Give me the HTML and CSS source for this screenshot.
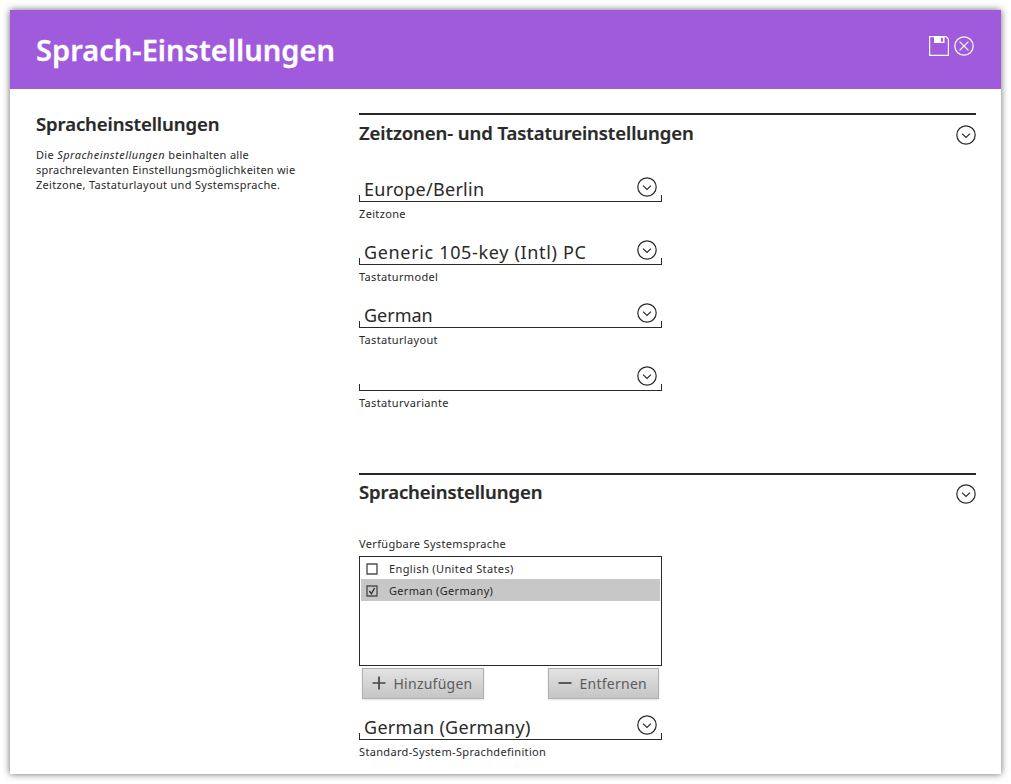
FILE: index.html
```html
<!DOCTYPE html>
<html lang="de">
<head>
<meta charset="utf-8">
<title>Sprach-Einstellungen</title>
<link rel="stylesheet" href="styles.css">
</head>
<body>
<svg width="0" height="0" class="defs">
  <symbol id="chevron" viewBox="0 0 20 20"><circle cx="10" cy="10" r="9.2"/><path d="M6 8.6l4 3.9 4-3.9"/></symbol>
</svg>
<div class="panel">
  <header class="header">
    <h1>Sprach-Einstellungen</h1>
    <div class="tools">
      <svg class="tool" viewBox="0 0 20 20"><path d="M.6.6h16.3l2.5 2.5v16.3H.6z"/><path class="solid" fill-rule="evenodd" d="M5 .5h10.5V7H5zM12 1.8v3.9h2V1.8z"/></svg>
      <svg class="tool" viewBox="0 0 20 20"><circle cx="10" cy="10" r="9.2"/><path d="M5.6 5.6l8.8 8.8M14.4 5.6l-8.8 8.8"/></svg>
    </div>
  </header>
  <div class="content">
    <aside class="side">
      <h2>Spracheinstellungen</h2>
      <p>Die <em>Spracheinstellungen</em> beinhalten alle<br><span class="tight">sprachrelevanten Einstellungsmöglichkeiten wie</span><br>Zeitzone, Tastaturlayout und Systemsprache.</p>
    </aside>
    <main class="main">
      <section class="section timezone">
        <div class="section-head"><h2>Zeitzonen- und Tastatureinstellungen</h2><svg class="icon"><use href="#chevron"/></svg></div>
        <div class="field"><div class="select"><span>Europe/Berlin</span><svg class="icon"><use href="#chevron"/></svg></div><label>Zeitzone</label></div>
        <div class="field"><div class="select"><span class="spaced">Generic 105-key (Intl) PC</span><svg class="icon"><use href="#chevron"/></svg></div><label>Tastaturmodel</label></div>
        <div class="field"><div class="select"><span class="narrow">German</span><svg class="icon"><use href="#chevron"/></svg></div><label>Tastaturlayout</label></div>
        <div class="field"><div class="select"><span></span><svg class="icon"><use href="#chevron"/></svg></div><label>Tastaturvariante</label></div>
      </section>
      <section class="section language">
        <div class="section-head"><h2>Spracheinstellungen</h2><svg class="icon"><use href="#chevron"/></svg></div>
        <label>Verfügbare Systemsprache</label>
        <div class="list">
          <div class="row"><svg class="check" viewBox="0 0 12 12"><path d="M1 1h10v10H1z"/></svg>English (United States)</div>
          <div class="row selected"><svg class="check" viewBox="0 0 12 12"><path d="M1 1h10v10H1z"/><path class="tick" d="M3.4 6l2 2.8L8.6 3"/></svg>German (Germany)</div>
        </div>
        <div class="buttons">
          <button class="add"><svg viewBox="0 0 14 14"><path d="M7 .5v13M.5 7h13"/></svg>Hinzufügen</button>
          <button class="remove"><svg viewBox="0 0 14 14"><path d="M.5 7h13"/></svg>Entfernen</button>
        </div>
        <div class="field"><div class="select"><span>German (Germany)</span><svg class="icon"><use href="#chevron"/></svg></div><label>Standard-System-Sprachdefinition</label></div>
      </section>
    </main>
  </div>
</div>
</body>
</html>
```
FILE: styles.css
```css
* { box-sizing: border-box; }
body { margin: 0; padding: 10px; background: #fff; color: #292929; font: 11px/15px "Noto Sans", sans-serif; overflow: hidden; }
.defs { position: absolute; }
.panel { height: 764px; background: #fff; box-shadow: 0 0 7px rgba(0,0,0,.6); }
.header { display: flex; justify-content: space-between; height: 79px; padding: 0 27px 0 26px; background: #a05bdc; color: #fff; }
h1, h2, p { margin: 0; }
h1 { font-size: 29px; line-height: 79px; font-weight: 600; letter-spacing: .03px; -webkit-text-stroke: .3px; }
h2 { font-size: 18.5px; line-height: 24px; font-weight: 600; letter-spacing: -.08px; -webkit-text-stroke: .2px; white-space: nowrap; }
.tools { display: flex; gap: 5px; padding-top: 26px; }
.tool, .icon { width: 20px; height: 20px; fill: none; stroke: currentColor; stroke-width: 1.2; flex: none; }
.tool .solid { fill: #fff; stroke: none; }
.content { display: grid; grid-template-columns: 323px 617px; padding: 23px 25px 0 26px; }
.side p { margin-top: 11px; letter-spacing: .3px; white-space: nowrap; }
.side em { letter-spacing: .48px; }
.side .tight { letter-spacing: .23px; }
.main { padding-top: 1px; }
.section { border-top: 2px solid #292929; }
.section-head { display: flex; justify-content: space-between; padding-top: 6px; }
.section-head .icon { margin-top: 4px; }
.timezone { height: 360px; }
.timezone .section-head { height: 58px; }
.language .section-head { height: 61px; padding-top: 5px; }
.field { width: 303px; height: 63px; }
.select { position: relative; display: flex; justify-content: space-between; height: 29px; padding: 4px 5px 0; font-size: 18px; line-height: 24px; letter-spacing: .28px; margin-bottom: 4px; white-space: nowrap; }
.select .spaced { letter-spacing: .66px; }
.select .narrow { letter-spacing: 0; }
.select::after { content: ""; position: absolute; left: 0; right: 0; bottom: 0; height: 6px; border: 1px solid #292929; border-top: 0; }
label { display: block; letter-spacing: .34px; }
.list { width: 303px; height: 110px; margin-top: 5px; border: 1px solid #292929; padding: 0 1px; }
.row { display: flex; align-items: center; height: 22px; padding: 0 5px; gap: 11px; letter-spacing: .38px; }
.selected { background: #c7c7c7; letter-spacing: .32px; }
.check { width: 12px; height: 12px; fill: none; stroke: #505050; stroke-width: 1.4; margin-top: 2px; }
.check .tick { stroke: #333; }
.buttons { display: flex; justify-content: space-between; width: 303px; padding: 2px 3px 0; margin-bottom: 12px; }
button { display: flex; align-items: center; height: 31px; padding: 0 0 0 9px; gap: 7.5px; border: 1px solid #b0b0b0; background: linear-gradient(#e3e3e3, #c5c5c5); box-shadow: 0 1px 2px rgba(0,0,0,.12); color: #5c5c5c; font: 14px/24px "Noto Sans", sans-serif; letter-spacing: .25px; }
button svg { width: 14px; height: 14px; fill: none; stroke: #444; stroke-width: 1.7; margin-top: -1px; }
.add { width: 122px; }
.remove { width: 111px; }
```
